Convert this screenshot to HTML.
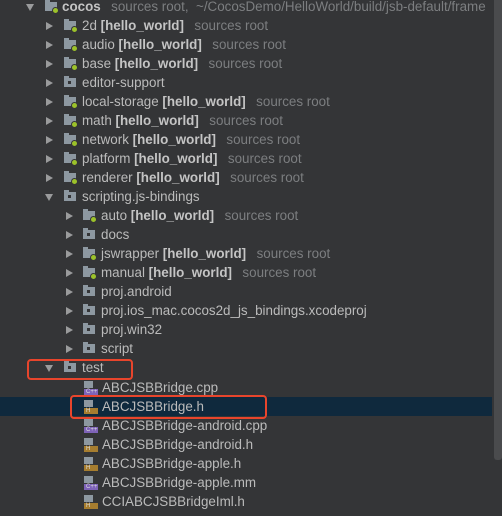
<!DOCTYPE html><html><head><style>
body{margin:0;width:502px;height:516px;background:#343537;overflow:hidden;position:relative;font-family:"Liberation Sans",sans-serif;font-size:13.4px;color:#bbbbbb}
.r{position:absolute;left:0;height:19px;line-height:19px;white-space:nowrap;width:492px}
.a{position:absolute;top:6px;width:0;height:0}
.a.c{border-left:7px solid #9a9b9c;border-top:4px solid transparent;border-bottom:4px solid transparent}
.a.o{border-top:7px solid #9a9b9c;border-left:4px solid transparent;border-right:4px solid transparent;top:7px}
.f{position:absolute;top:5px;width:12px;height:9px;background:#8d98a1}
.f:before{content:"";position:absolute;left:0;top:-2px;width:5px;height:2px;background:#8d98a1}
.f.s:after{content:"";position:absolute;left:4px;top:3px;width:3px;height:3px;background:#343537}
.g{position:absolute;left:7px;top:5px;width:5px;height:5px;border-radius:50%;background:#9cc22a;border:1px solid #343537}
.t{position:absolute;top:0}
b{color:#c4c4c4}
.m{color:#7c7e80;margin-left:3px}
.fi{position:absolute;left:84px;top:3px;width:14px;height:14px}
.fi i{position:absolute;left:0;top:0;width:9px;height:7px;background:#8d98a1}
.fi u{position:absolute;left:0;top:8px;width:14px;height:6px;font-size:6px;line-height:6px;color:#ddd;text-decoration:none;padding-left:2px;box-sizing:border-box}
.h u{background:#a67d2f}.cp u{background:#7e63b8}
.sb{position:absolute;left:494px;top:0;width:8px;height:460px;background:#4a4b4d;border-radius:0 0 3px 3px}
.box{position:absolute;border:2px solid #e8452c;border-radius:4px}
</style></head><body>
<div class="sb"></div>
<div class="r" style="top:397px;background:#0f293d"></div>

<div class="r" style="top:-3px"><div class="a o" style="left:26px"></div><div class="f" style="left:45px"><div class="g"></div></div><span class="t" style="left:62px"><b>cocos</b> <span class="m">&nbsp;sources root,&nbsp; ~/CocosDemo/HelloWorld/build/jsb-default/frame</span></span></div>
<div class="r" style="top:16px"><div class="a c" style="left:46px"></div><div class="f" style="left:64px"><div class="g"></div></div><span class="t" style="left:82px">2d <b>[hello_world]</b> <span class="m">&nbsp;sources root</span></span></div>
<div class="r" style="top:35px"><div class="a c" style="left:46px"></div><div class="f" style="left:64px"><div class="g"></div></div><span class="t" style="left:82px">audio <b>[hello_world]</b> <span class="m">&nbsp;sources root</span></span></div>
<div class="r" style="top:54px"><div class="a c" style="left:46px"></div><div class="f" style="left:64px"><div class="g"></div></div><span class="t" style="left:82px">base <b>[hello_world]</b> <span class="m">&nbsp;sources root</span></span></div>
<div class="r" style="top:73px"><div class="a c" style="left:46px"></div><div class="f s" style="left:64px"></div><span class="t" style="left:82px">editor-support</span></div>
<div class="r" style="top:92px"><div class="a c" style="left:46px"></div><div class="f" style="left:64px"><div class="g"></div></div><span class="t" style="left:82px">local-storage <b>[hello_world]</b> <span class="m">&nbsp;sources root</span></span></div>
<div class="r" style="top:111px"><div class="a c" style="left:46px"></div><div class="f" style="left:64px"><div class="g"></div></div><span class="t" style="left:82px">math <b>[hello_world]</b> <span class="m">&nbsp;sources root</span></span></div>
<div class="r" style="top:130px"><div class="a c" style="left:46px"></div><div class="f" style="left:64px"><div class="g"></div></div><span class="t" style="left:82px">network <b>[hello_world]</b> <span class="m">&nbsp;sources root</span></span></div>
<div class="r" style="top:149px"><div class="a c" style="left:46px"></div><div class="f" style="left:64px"><div class="g"></div></div><span class="t" style="left:82px">platform <b>[hello_world]</b> <span class="m">&nbsp;sources root</span></span></div>
<div class="r" style="top:168px"><div class="a c" style="left:46px"></div><div class="f" style="left:64px"><div class="g"></div></div><span class="t" style="left:82px">renderer <b>[hello_world]</b> <span class="m">&nbsp;sources root</span></span></div>
<div class="r" style="top:187px"><div class="a o" style="left:45px"></div><div class="f s" style="left:64px"></div><span class="t" style="left:82px">scripting.js-bindings</span></div>
<div class="r" style="top:206px"><div class="a c" style="left:66px"></div><div class="f" style="left:83px"><div class="g"></div></div><span class="t" style="left:101px">auto <b>[hello_world]</b> <span class="m">&nbsp;sources root</span></span></div>
<div class="r" style="top:225px"><div class="a c" style="left:66px"></div><div class="f s" style="left:83px"></div><span class="t" style="left:101px">docs</span></div>
<div class="r" style="top:244px"><div class="a c" style="left:66px"></div><div class="f" style="left:83px"><div class="g"></div></div><span class="t" style="left:101px">jswrapper <b>[hello_world]</b> <span class="m">&nbsp;sources root</span></span></div>
<div class="r" style="top:263px"><div class="a c" style="left:66px"></div><div class="f" style="left:83px"><div class="g"></div></div><span class="t" style="left:101px">manual <b>[hello_world]</b> <span class="m">&nbsp;sources root</span></span></div>
<div class="r" style="top:282px"><div class="a c" style="left:66px"></div><div class="f s" style="left:83px"></div><span class="t" style="left:101px">proj.android</span></div>
<div class="r" style="top:301px"><div class="a c" style="left:66px"></div><div class="f s" style="left:83px"></div><span class="t" style="left:101px">proj.ios_mac.cocos2d_js_bindings.xcodeproj</span></div>
<div class="r" style="top:320px"><div class="a c" style="left:66px"></div><div class="f s" style="left:83px"></div><span class="t" style="left:101px">proj.win32</span></div>
<div class="r" style="top:339px"><div class="a c" style="left:66px"></div><div class="f s" style="left:83px"></div><span class="t" style="left:101px">script</span></div>
<div class="r" style="top:358px"><div class="a o" style="left:45px"></div><div class="f s" style="left:64px"></div><span class="t" style="left:82px">test</span></div>
<div class="r" style="top:378px"><div class="fi cp"><i></i><u>C++</u></div><span class="t" style="left:102px">ABCJSBBridge.cpp</span></div>
<div class="r" style="top:397px"><div class="fi h"><i></i><u>H</u></div><span class="t" style="left:102px">ABCJSBBridge.h</span></div>
<div class="r" style="top:416px"><div class="fi cp"><i></i><u>C++</u></div><span class="t" style="left:102px">ABCJSBBridge-android.cpp</span></div>
<div class="r" style="top:435px"><div class="fi h"><i></i><u>H</u></div><span class="t" style="left:102px">ABCJSBBridge-android.h</span></div>
<div class="r" style="top:454px"><div class="fi h"><i></i><u>H</u></div><span class="t" style="left:102px">ABCJSBBridge-apple.h</span></div>
<div class="r" style="top:473px"><div class="fi cp"><i></i><u>C++</u></div><span class="t" style="left:102px">ABCJSBBridge-apple.mm</span></div>
<div class="r" style="top:492px"><div class="fi h"><i></i><u>H</u></div><span class="t" style="left:102px">CCIABCJSBBridgeIml.h</span></div>

<div class="box" style="left:27px;top:359px;width:102px;height:17px"></div>
<div class="box" style="left:70px;top:395px;width:193px;height:20px"></div>
</body></html>
